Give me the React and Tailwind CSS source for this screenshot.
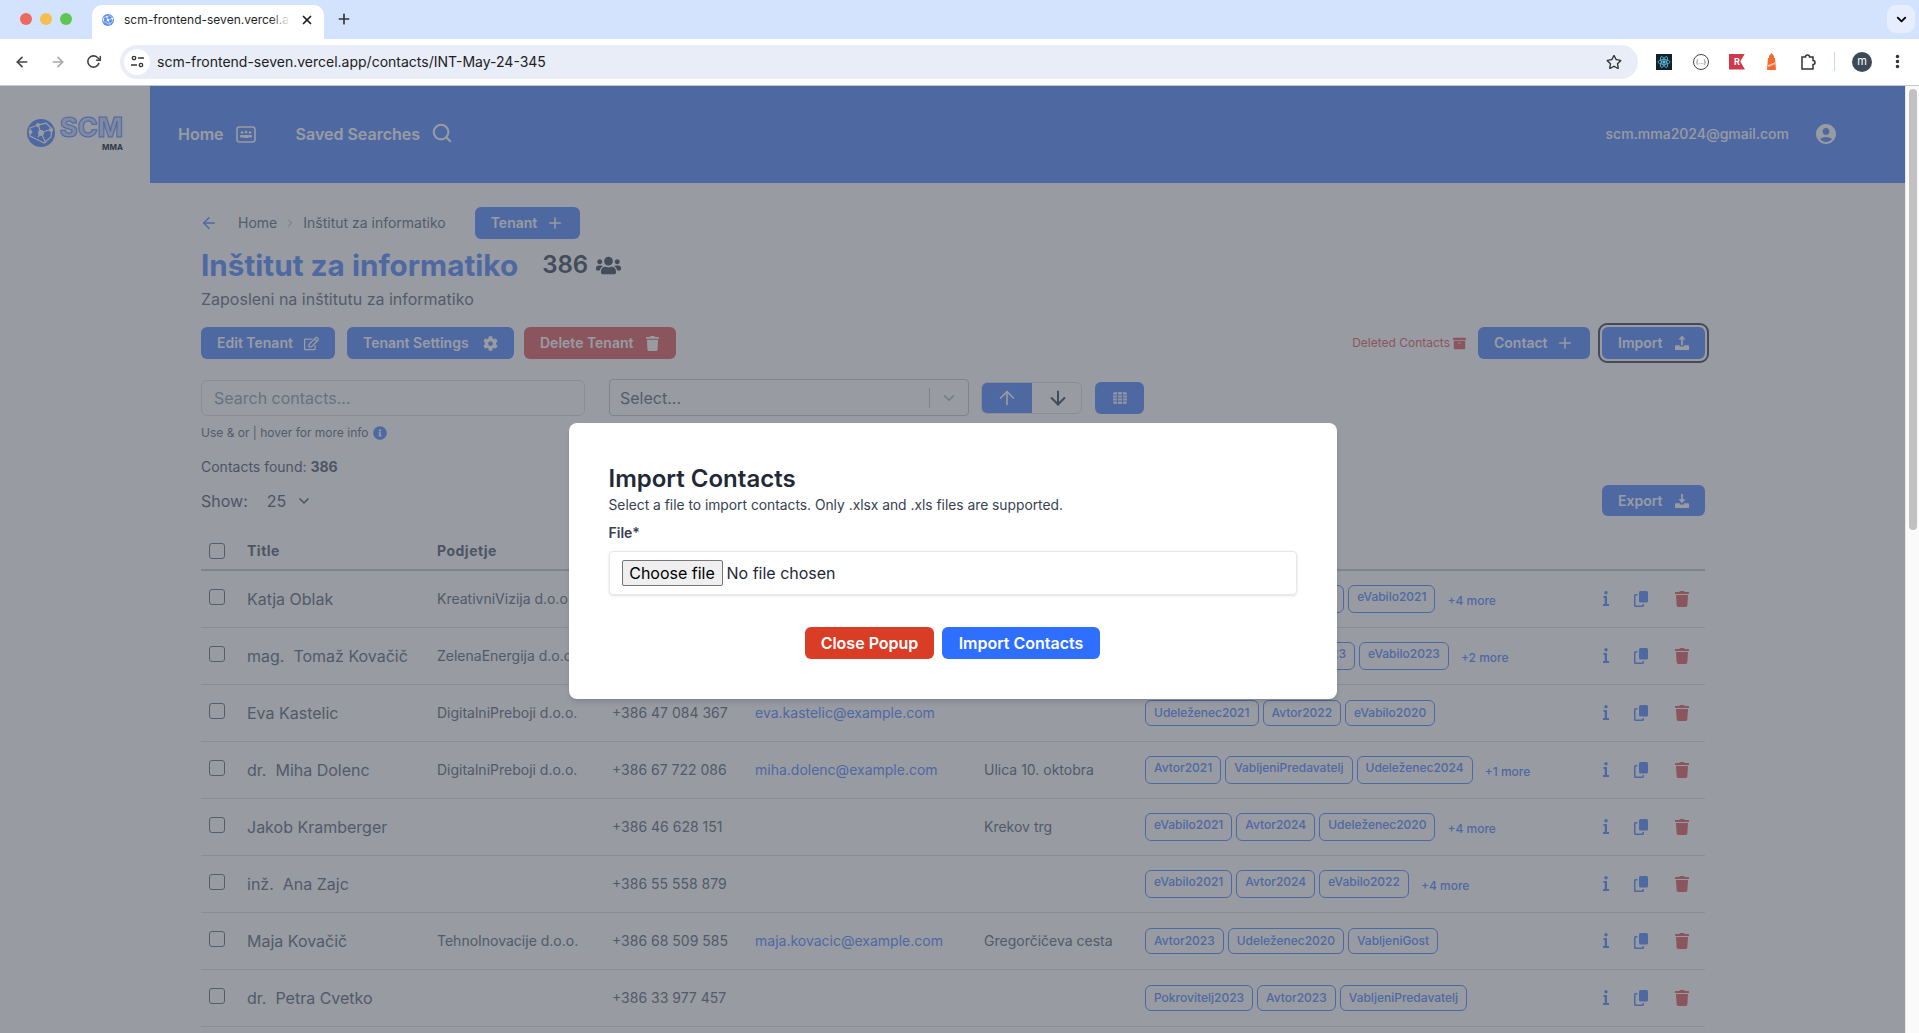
import React from 'react'
import { FaRegEdit, FaCog, FaTrash, FaUsers, FaInfoCircle, FaArchive, FaRegStar } from 'react-icons/fa'
import { MdAccountCircle } from 'react-icons/md'
import { FiPlus, FiArrowLeft, FiArrowRight, FiArrowUp, FiArrowDown, FiChevronDown, FiChevronRight, FiSearch, FiRotateCw, FiX } from 'react-icons/fi'
import { HiOutlineDotsVertical } from 'react-icons/hi'

const UploadIcon = ({ down }) => (
    <svg width="14" height="16" viewBox="0 0 16 18" fill="currentColor">
        {down ? (
            <path d="M7 1h2v6h3l-4 4.500L4 7h3z" />
        ) : (
            <path d="M8 0.500l4 4.500H9v6.500H7V5H4z" />
        )}
        <path d="M1 11.500h4.500v1.500h5V11.500H15a1 1 0 0 1 1 1V16a1 1 0 0 1-1 1H1a1 1 0 0 1-1-1v-3.500a1 1 0 0 1 1-1z" />
    </svg>
)

const CopyIcon = () => (
    <svg width="14" height="16" viewBox="0 0 14 16" fill="currentColor">
        <rect x="5" y="0" width="9" height="11.500" rx="1.500" />
        <path d="M1.500 3H3.500v1.500H1.800a.3.3 0 0 0-.3.300v9.400a.3.3 0 0 0 .3.300h6.400a.3.3 0 0 0 .3-.3V13H10v1.500a1.500 1.500 0 0 1-1.500 1.500h-7A1.500 1.500 0 0 1 0 14.500v-10A1.500 1.500 0 0 1 1.500 3z" />
    </svg>
)

const InfoIcon = () => (
    <svg width="6" height="15" viewBox="0 0 6 15" fill="currentColor">
        <circle cx="3" cy="1.700" r="1.700" />
        <path d="M0.500 5H4v8h2v2H0v-2h1.700V7H0.500z" />
    </svg>
)

const GridIcon = () => (
    <svg width="14" height="12" viewBox="0 0 14 12" fill="currentColor" opacity="0.85">
        <rect x="0" y="0" width="14" height="12" rx="2" />
        <path d="M4.500 0v12M9.500 0v12M0 3h14M0 6h14M0 9h14" stroke="#7ea6ff" strokeWidth="0.900" />
    </svg>
)

const HomeIcon = () => (
    <svg width="20" height="17" viewBox="0 0 20 17" fill="none" stroke="currentColor">
        <rect x="1" y="1" width="18" height="15" rx="2.500" strokeWidth="1.600" />
        <g fill="currentColor" stroke="none">
            <circle cx="6" cy="6.500" r="1.300" />
            <circle cx="10" cy="6" r="1.500" />
            <circle cx="14" cy="6.500" r="1.300" />
            <rect x="4" y="9" width="4" height="2.500" rx="1" />
            <rect x="7.500" y="9" width="5" height="3" rx="1" />
            <rect x="12" y="9" width="4" height="2.500" rx="1" />
        </g>
    </svg>
)

const Globe = ({ size, color }) => (
    <svg width={size} height={size} viewBox="0 0 28 28">
        <circle cx="14" cy="14" r="14" fill={color} />
        <g stroke="#fff" strokeWidth="1.300" fill="none">
            <path d="M3 9l8-3 8-2 6 6-1 8-7 6-8-4-6-3z" />
            <path d="M11 6l3 8-3 4M14 14l10-4M14 14l5 10" />
        </g>
        <g fill="#fff">
            <circle cx="11" cy="6" r="2" />
            <circle cx="14" cy="14" r="3" />
            <circle cx="3.500" cy="13" r="2" />
            <circle cx="24" cy="11" r="2" />
        </g>
    </svg>
)

const Browser = () => (
    <div className="shrink-0">
        <div className="h-[39px] bg-[#d3e3fd] flex items-end relative">
            <div className="flex gap-[8px] w-[92px] pl-[20px] self-start pt-[13px]">
                <span className="w-3 h-3 rounded-full bg-[#ed6a5e]"></span>
                <span className="w-3 h-3 rounded-full bg-[#f5bf4f]"></span>
                <span className="w-3 h-3 rounded-full bg-[#61c554]"></span>
            </div>
            <div className="w-[232px] h-[34px] bg-white rounded-t-[10px] flex items-center pl-[10px] pr-[10px] pb-[5px] text-[#1f1f1f]">
                <Globe size={12} color="#5b8def" />
                <span className="relative ml-[10px] w-[166px] overflow-hidden whitespace-nowrap text-[12px]">
                    scm-frontend-seven.vercel.app
                    <span className="absolute right-0 top-0 h-full w-5 bg-gradient-to-r from-transparent to-white"></span>
                </span>
                <FiX className="ml-auto text-[14px]" strokeWidth={3} />
            </div>
            <FiPlus className="ml-[12px] mb-[12px] text-[16px] text-[#333]" strokeWidth={2.500} />
            <div className="absolute right-[4px] top-[5px] w-[28px] h-[28px] rounded-[9px] bg-[#e6eefd] flex items-center justify-center">
                <FiChevronDown className="text-[15px]" strokeWidth={3} />
            </div>
        </div>
        <div className="h-[48px] bg-white flex items-center border-b border-[#c4c7cc] rounded-t-[8px] -mt-px">
            <div className="flex items-center w-[120px] pl-[14px] gap-[20px] text-[#444]">
                <FiArrowLeft className="text-[16px]" strokeWidth={2.500} />
                <FiArrowRight className="text-[16px] text-[#a8a8a8]" strokeWidth={2.500} />
                <FiRotateCw className="text-[15px]" strokeWidth={2.500} />
            </div>
            <div className="w-[1518px] h-[34px] rounded-full bg-[#e9edf7] flex items-center pl-[4px] pr-[16px]">
                <div className="w-[26px] h-[26px] rounded-full bg-white flex items-center justify-center">
                    <svg width="13" height="13" viewBox="0 0 13 13" fill="none" stroke="#333" strokeWidth="1.300">
                        <circle cx="3" cy="3" r="1.700" />
                        <path d="M7 3h6M0 10h6" />
                        <circle cx="10" cy="10" r="1.700" />
                    </svg>
                </div>
                <span className="ml-[7px] text-[14px] text-[#202124]">scm-frontend-seven.vercel.app/contacts/INT-May-24-345</span>
                <FaRegStar className="ml-auto text-[16px] text-[#333]" />
            </div>
            <div className="flex items-center ml-[18px] text-[#333]">
                <span className="w-4 h-4 bg-[#16202b] flex items-center justify-center">
                    <svg width="14" height="14" viewBox="0 0 14 14" fill="none" stroke="#58c4dc" strokeWidth="0.800">
                        <ellipse cx="7" cy="7" rx="6" ry="2.400" />
                        <ellipse cx="7" cy="7" rx="6" ry="2.400" transform="rotate(60 7 7)" />
                        <ellipse cx="7" cy="7" rx="6" ry="2.400" transform="rotate(120 7 7)" />
                        <circle cx="7" cy="7" r="1.200" fill="#58c4dc" />
                    </svg>
                </span>
                <span className="ml-[21px] w-4 h-4 rounded-full border border-[#444] text-[6px] flex items-center justify-center">{'{...}'}</span>
                <span className="ml-[20px] w-4 h-4 bg-[#d0384c] text-white text-[9px] font-bold flex items-center justify-center" style={{ clipPath: 'polygon(0 0, 100% 0, 70% 50%, 100% 100%, 0 100%)' }}>R</span>
                <svg className="ml-[20px]" width="13" height="18" viewBox="0 0 13 18">
                    <path d="M6.500 0L9 3v2h1l1 12H2L3 5h1V3z" fill="#f4692f" />
                    <path d="M3 12l8-3v2l-8 3z" fill="#fcc0a4" />
                </svg>
                <svg className="ml-[22px]" width="16" height="16" viewBox="0 0 16 16" fill="none" stroke="#333" strokeWidth="1.500">
                    <path d="M2 3h3.500a2 2 0 0 1 4 0H13v3.500a2 2 0 0 1 0 4V15H2z" />
                </svg>
                <span className="ml-[18px] w-px h-[19px] bg-[#c9d7f0]"></span>
                <span className="ml-[17px] w-5 h-5 rounded-full bg-[#3c4a57] text-white text-[11px] flex items-center justify-center">m</span>
                <HiOutlineDotsVertical className="ml-[17px] text-[17px]" strokeWidth={3} />
            </div>
        </div>
    </div>
)

const Btn = ({ children, red, cls }) => (
    <button className={`h-8 px-4 rounded-md flex items-center justify-between text-sm font-semibold text-white ${red ? 'bg-[#e98587]' : 'bg-[#7ea6ff]'} ${cls || ''}`}>
        {children}
    </button>
)

// phone, email and address of the first two rows sit behind the popup
const rows = [
    { name: 'Katja Oblak', company: 'KreativniVizija d.o.o.', phone: '', email: '', address: '', tags: ['Udeleženec2024', 'Avtor2020', 'eVabilo2021'], more: '+4 more', tall: true },
    { name: 'mag.  Tomaž Kovačič', company: 'ZelenaEnergija d.o.o.', phone: '', email: '', address: '', tags: ['VabljeniPredavatelj', 'Avtor2023', 'eVabilo2023'], more: '+2 more', tall: true },
    { name: 'Eva Kastelic', company: 'DigitalniPreboji d.o.o.', phone: '+386 47 084 367', email: 'eva.kastelic@example.com', address: '', tags: ['Udeleženec2021', 'Avtor2022', 'eVabilo2020'] },
    { name: 'dr.  Miha Dolenc', company: 'DigitalniPreboji d.o.o.', phone: '+386 67 722 086', email: 'miha.dolenc@example.com', address: 'Ulica 10. oktobra', tags: ['Avtor2021', 'VabljeniPredavatelj', 'Udeleženec2024'], more: '+1 more', tall: true },
    { name: 'Jakob Kramberger', company: '', phone: '+386 46 628 151', email: '', address: 'Krekov trg', tags: ['eVabilo2021', 'Avtor2024', 'Udeleženec2020'], more: '+4 more', tall: true },
    { name: 'inž.  Ana Zajc', company: '', phone: '+386 55 558 879', email: '', address: '', tags: ['eVabilo2021', 'Avtor2024', 'eVabilo2022'], more: '+4 more', tall: true },
    { name: 'Maja Kovačič', company: 'TehnoInovacije d.o.o.', phone: '+386 68 509 585', email: 'maja.kovacic@example.com', address: 'Gregorčičeva cesta', tags: ['Avtor2023', 'Udeleženec2020', 'VabljeniGost'] },
    { name: 'dr.  Petra Cvetko', company: '', phone: '+386 33 977 457', email: '', address: '', tags: ['Pokrovitelj2023', 'Avtor2023', 'VabljeniPredavatelj'] },
]

const Checkbox = () => <span className="block w-4 h-4 rounded-[3px] border border-[#8b919e] bg-white"></span>

const Header = () => (
    <div className="h-[97px] flex shrink-0">
        <div className="w-[150px] bg-white flex items-start pl-[27px] pt-[33px]">
            <Globe size={28} color="#7ea6ff" />
            <div className="ml-[9px] -mt-[2px] flex flex-col items-end w-[59px]">
                <span className="text-[27px] leading-[21px] font-extrabold text-[#d5e2ff] [-webkit-text-stroke:1px_#7ea6ff]">SCM</span>
                <span className="mt-[5px] text-[8px] leading-[8px] font-bold text-[#4b5563]">MMA</span>
            </div>
        </div>
        <div className="flex-1 bg-[#7ea6ff] flex items-center text-white pl-[28px] pr-[67px] pb-[1px]">
            <span className="font-semibold text-base">Home</span>
            <span className="ml-[12px]"><HomeIcon /></span>
            <span className="ml-[40px] font-semibold text-base">Saved Searches</span>
            <FiSearch className="ml-[11px] -mt-[3px] text-[22px]" strokeWidth={2.300} />
            <span className="ml-auto text-sm font-medium">scm.mma2024@gmail.com</span>
            <MdAccountCircle className="ml-[25px] text-[24px]" />
        </div>
    </div>
)

const Contacts = () => (
    <div className="pl-[201px] pr-[200px] pt-[24px]">
        <div className="flex items-center h-8 text-sm text-[#8a909c]">
            <FiArrowLeft className="text-[18px] text-[#7ea6ff] -ml-[1px]" strokeWidth={2} />
            <span className="ml-[20px]">Home</span>
            <FiChevronRight className="mx-[7px] text-[12px] text-[#b6bac1]" />
            <span>Inštitut za informatiko</span>
            <Btn cls="ml-[29px] w-[105px]">Tenant <FiPlus className="text-[18px]" strokeWidth={2} /></Btn>
        </div>
        <div className="flex items-center mt-2 h-9">
            <h1 className="text-[29.700px] leading-9 font-bold text-[#7ea6ff]">Inštitut za informatiko</h1>
            <span className="ml-[24px] text-2xl font-semibold text-[#6b7280]">386</span>
            <FaUsers className="ml-[8px] text-[25px] text-[#6b7280]" />
        </div>
        <p className="mt-1 text-base text-[#8a909c]">Zaposleni na inštitutu za informatiko</p>
        <div className="flex items-center mt-4">
            <Btn cls="w-[134px]">Edit Tenant <FaRegEdit className="text-[15px]" /></Btn>
            <Btn cls="ml-[12px] w-[167px]">Tenant Settings <FaCog className="text-[15px]" /></Btn>
            <Btn red cls="ml-[10px] w-[152px]">Delete Tenant <FaTrash className="text-[15px]" /></Btn>
            <span className="ml-auto text-xs text-[#e98587]">Deleted Contacts</span>
            <FaArchive className="ml-[3px] text-[13px] text-[#e98587]" />
            <Btn cls="ml-[12px] w-[112px]">Contact <FiPlus className="text-[18px]" strokeWidth={2} /></Btn>
            <div className="ml-[8px] p-[2px] -my-[4px] -mr-[4px] rounded-[9px] border-2 border-[#6b7280]">
                <Btn cls="w-[103px]">Import <UploadIcon /></Btn>
            </div>
        </div>
        <div className="flex items-center mt-[20px]">
            <div className="w-[384px] h-9 rounded-md border border-[#e5e7eb] bg-white px-3 flex items-center text-base text-[#b0b5bf]">Search contacts...</div>
            <div className="ml-6 w-[360px] h-[37px] rounded-[4px] border border-[#d1d5db] bg-white flex items-center pl-[10px] text-base text-[#8a909c]">
                Select...
                <span className="ml-auto w-px h-[20px] bg-[#d1d5db]"></span>
                <FiChevronDown className="mx-[10px] text-[18px] text-[#c1c4ca]" />
            </div>
            <div className="ml-3 flex h-8 w-[101px] rounded-md border border-[#e5e7eb] bg-white overflow-hidden">
                <span className="w-[50px] bg-[#7ea6ff] flex items-center justify-center text-white"><FiArrowUp className="text-[22px]" strokeWidth={1.800} /></span>
                <span className="flex-1 flex items-center justify-center text-[#6b7280] pl-[2px]"><FiArrowDown className="text-[22px]" strokeWidth={2.200} /></span>
            </div>
            <span className="ml-[13px] w-[49px] h-8 rounded-md bg-[#7ea6ff] flex items-center justify-center text-white"><GridIcon /></span>
        </div>
        <div className="flex items-center mt-[9px] text-xs text-[#8a909c] leading-4">
            Use &amp; or | hover for more info
            <FaInfoCircle className="ml-1 text-[14px] text-[#7ea6ff]" />
        </div>
        <p className="mt-4 text-sm text-[#7c8391]">Contacts found: <span className="font-bold">386</span></p>
        <div className="flex items-center mt-[8px] h-[31px] text-base text-[#7c8391]">
            Show:
            <span className="ml-[19px]">25</span>
            <FiChevronDown className="ml-[10px] text-[16px]" strokeWidth={2.500} />
            <Btn cls="ml-auto w-[103px] !h-[31px]">Export <UploadIcon down /></Btn>
        </div>
        <table className="w-[1504px] mt-[16px] table-fixed border-collapse text-sm text-[#868d9b]">
            <colgroup>
                <col className="w-[46px]" />
                <col className="w-[190px]" />
                <col className="w-[175px]" />
                <col className="w-[143px]" />
                <col className="w-[229px]" />
                <col className="w-[161px]" />
                <col className="w-[445px]" />
                <col />
            </colgroup>
            <thead>
                <tr className="h-[38px] border-b-2 border-[#d1d5db] text-left font-bold tracking-[0.500px] text-[#7c8391]">
                    <th className="pl-2"><Checkbox /></th>
                    <th>Title</th>
                    <th>Podjetje</th>
                    <th></th>
                    <th></th>
                    <th></th>
                    <th></th>
                    <th></th>
                </tr>
            </thead>
            <tbody>
                {rows.map((r) => (
                    <tr key={r.name} className="h-[57px] border-b border-[#e5e7eb]">
                        <td className="pl-2 align-middle"><div className="-mt-[3px]"><Checkbox /></div></td>
                        <td className="text-base whitespace-pre">{r.name}</td>
                        <td className="whitespace-nowrap">{r.company}</td>
                        <td>{r.phone}</td>
                        <td className="text-[#7ea6ff]">{r.email}</td>
                        <td>{r.address}</td>
                        <td>
                            <div className="flex items-start gap-[4px] text-xs font-medium text-[#7ea6ff]">
                                {r.tags.map((t) => (
                                    <span key={t} className={`px-2 rounded-md border border-[#7ea6ff] flex items-center ${r.tall ? 'h-[28px] pb-[3px]' : 'h-[26px]'}`}>{t}</span>
                                ))}
                                {r.more && <span className="ml-[8px] mt-[8px] text-xs">{r.more}</span>}
                            </div>
                        </td>
                        <td>
                            <div className="flex items-center pl-[13px] text-[#7ea6ff]">
                                <InfoIcon />
                                <span className="ml-[25px]"><CopyIcon /></span>
                                <FaTrash className="ml-[26px] text-[16px] text-[#e98587]" />
                            </div>
                        </td>
                    </tr>
                ))}
            </tbody>
        </table>
    </div>
)

const ImportModal = () => (
    <div className="absolute inset-0 bg-[#111827]/[.43] flex items-center justify-center pt-[3px]">
        <div className="w-[768px] h-[276px] bg-white rounded-lg shadow-md p-10 text-[#1f2937]">
            <h2 className="text-2xl leading-[31px] font-semibold">Import Contacts</h2>
            <p className="mt-[1px] text-[13.800px] leading-5 text-[#374151]">Select a file to import contacts. Only .xlsx and .xls files are supported.</p>
            <p className="mt-[8px] text-sm leading-5 font-semibold text-[#374151]">File*</p>
            <div className="mt-[8px] h-[44px] rounded-[4px] border border-[#e5e7eb] shadow-sm flex items-center pl-[12px] text-base text-[#1f2937]">
                <button className="h-[26px] w-[101px] rounded-[2px] border border-[#767676] bg-[#efefef] text-black">Choose file</button>
                <span className="ml-[4px]">No file chosen</span>
            </div>
            <div className="mt-[32px] flex justify-center gap-2 font-semibold text-white">
                <button className="h-8 w-[129px] rounded-md bg-[#d93d25]">Close Popup</button>
                <button className="h-8 w-[158px] rounded-md bg-[#2f6fff]">Import Contacts</button>
            </div>
        </div>
    </div>
)

const App = () => {
    return (
        <div className="h-[1033px] overflow-hidden flex flex-col font-[Inter,sans-serif] bg-white">
            <Browser />
            <div className="flex-1 flex min-h-0">
                <div className="relative w-[1905px] overflow-hidden bg-white">
                    <Header />
                    <Contacts />
                    <ImportModal />
                </div>
                <div className="flex-1 bg-[#fafafa] border-l border-[#e6e6e6] pt-[3px] pl-[3px] pr-[2px]">
                    <div className="h-[441px] rounded-full bg-[#c1c1c1]"></div>
                </div>
            </div>
        </div>
    )
}

export default App
